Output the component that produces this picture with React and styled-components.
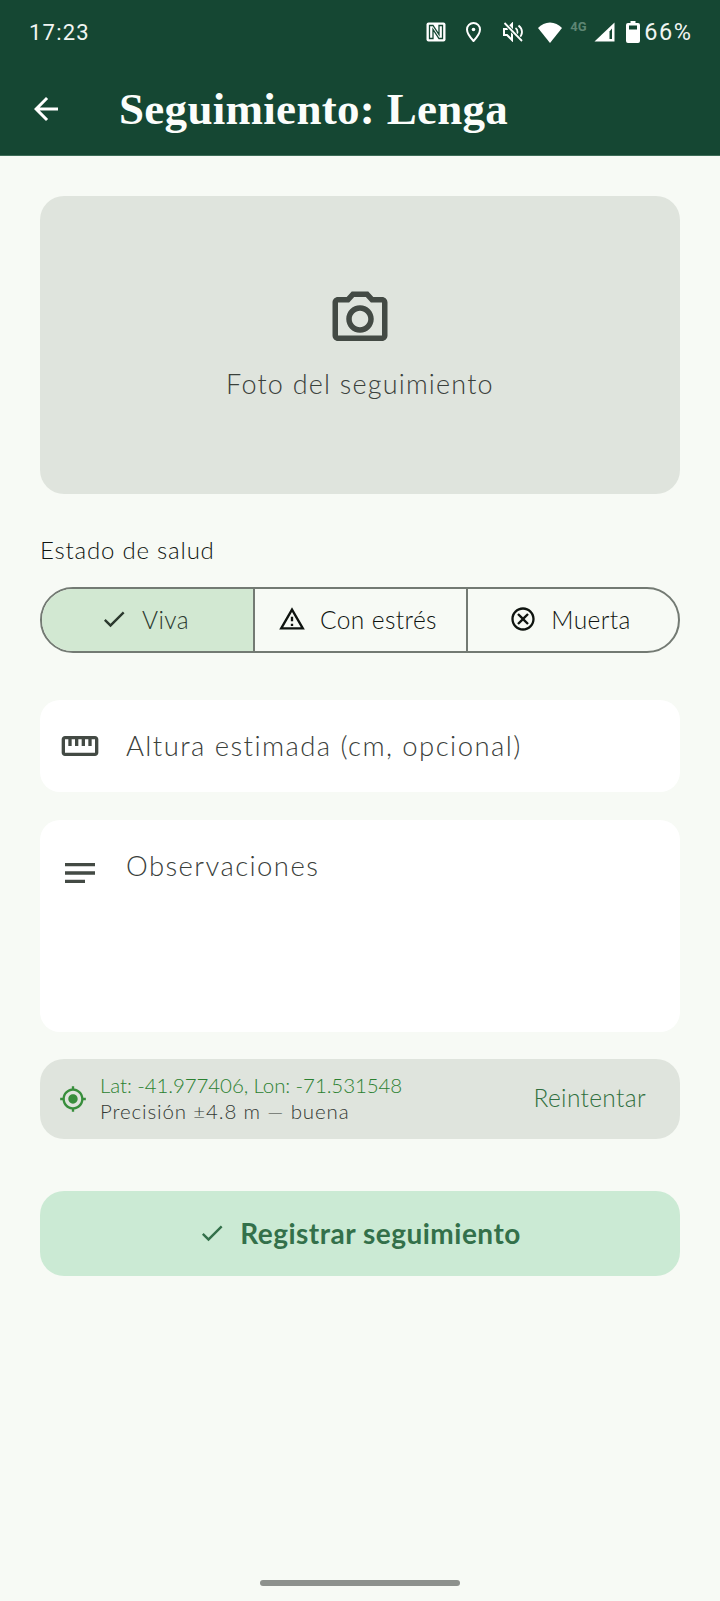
import React from 'react';
import styled, { createGlobalStyle } from 'styled-components';

const Global = createGlobalStyle`
  html, body { margin: 0; padding: 0; background: #f7faf5; }
  * { box-sizing: border-box; }
`;
const SANS = `Lato, "Open Sans", sans-serif`;

const Page = styled.div`
  width: 720px; height: 1601px; display: flex; flex-direction: column;
  background: #f7faf5; font-family: ${SANS};
`;
const Header = styled.header`
  height: 156px; flex: none; background: #154733; border-bottom: 1px solid #3d6d58;
  display: flex; flex-direction: column; color: #fff;
`;
const StatusBar = styled.div`
  height: 64px; display: flex; align-items: center; justify-content: space-between;
  padding: 0 29px 0 29px; font-family: Roboto, sans-serif; font-size: 22px; letter-spacing: 1.2px; color: #f1f5f2;
`;
const StatusIcons = styled.div`
  display: flex; align-items: center;
`;
const StatusGlyph = styled.svg`
  display: block; flex: none; margin-right: ${p => p.$mr || 0}px;
`;
const FourG = styled.span`
  font-size: 13px; font-weight: 700; letter-spacing: 0; color: #5e8674; margin: -11px 4px 0 0; width: 20px;
`;
const Percent = styled.span`
  font-size: 23.5px; letter-spacing: 1.5px; margin-right: -1.5px;
`;
const TopBar = styled.div`
  height: 87px; display: flex; align-items: center; padding: 2px 0 0 29px;
`;
const BackIcon = styled.svg`
  width: 36px; height: 36px; fill: #fff; margin-right: 55px; margin-left: -1px;
`;
const Title = styled.h1`
  margin: 0; font-family: "Liberation Serif", serif; font-weight: 700; font-size: 45px; letter-spacing: 0.3px; color: #fbfdfb;
`;
const Content = styled.main`
  flex: 1; padding: 40px 40px 0; display: flex; flex-direction: column;
`;
const PhotoCard = styled.div`
  height: 298px; border-radius: 24px; background: #dfe4dd; color: #3a403b;
  display: flex; flex-direction: column; align-items: center; padding-top: 90px;
`;
const PhotoIcon = styled.svg`
  width: 66px; height: 66px; fill: #434a44;
`;
const PhotoText = styled.div`
  font-size: 27px; font-weight: 300; margin-top: 15px; letter-spacing: 1.2px;
`;
const SectionLabel = styled.div`
  margin-top: 41px; font-size: 24px; font-weight: 300; line-height: 30px; color: #0f1410; letter-spacing: 0.8px;
`;
const Segments = styled.div`
  margin-top: 22px; height: 66px; display: grid; grid-template-columns: 211px 213px 1fr;
  border: 2px solid #737a73; border-radius: 33px; overflow: hidden;
`;
const Segment = styled.div`
  display: flex; align-items: center; justify-content: center; gap: 14px; padding: 0 6px 2px 0;
  background: ${p => (p.$active ? '#d2e8d2' : 'transparent')};
  color: ${p => (p.$active ? '#2c3a2f' : '#0f1410')};
  border-left: ${p => (p.$first ? 'none' : '2px solid #737a73')};
  font-size: 24.5px; font-weight: 300; letter-spacing: 0.4px;
`;
const SegIcon = styled.svg`
  width: 28px; height: 28px; fill: currentColor; flex: none;
`;
const Field = styled.div`
  margin-top: ${p => p.$mt}px; height: ${p => p.$h}px; background: #fff; border-radius: 20px;
  display: flex; align-items: ${p => (p.$top ? 'flex-start' : 'center')};
  padding: ${p => (p.$top ? '29px' : '0')} 0 0 20px; color: #434a44;
`;
const FieldIcon = styled.svg`
  width: 40px; height: 40px; fill: #434a44; flex: none; margin-right: 26px; margin-top: ${p => p.$mt || 0}px;
`;
const FieldText = styled.div`
  font-size: 27.5px; font-weight: 300; letter-spacing: 1.42px; line-height: 34px; color: #3a403b;
`;
const GpsCard = styled.div`
  margin-top: 27px; height: 80px; border-radius: 24px; background: #dfe4dd;
  display: flex; align-items: center; padding: 0 34px 0 19px;
`;
const GpsIcon = styled.svg`
  width: 28px; height: 28px; fill: #388e3c; flex: none; margin-right: 13px;
`;
const GpsText = styled.div`
  flex: 1; display: flex; flex-direction: column; gap: 1px; padding-bottom: 2px;
`;
const GpsCoords = styled.div`
  font-size: 20.5px; font-weight: 300; line-height: 25px; letter-spacing: -0.1px; color: #2b8131;
`;
const GpsAccuracy = styled.div`
  font-size: 20.5px; font-weight: 300; line-height: 25px; letter-spacing: 0.85px; color: #333934;
`;
const Retry = styled.div`
  font-size: 24.5px; font-weight: 300; letter-spacing: 0.35px; color: #317040; padding-bottom: 4px;
`;
const Submit = styled.div`
  margin-top: 52px; height: 85px; border-radius: 24px; background: #cbead4; color: #33704a;
  display: flex; align-items: center; justify-content: center; gap: 14px;
  font-size: 28px; font-weight: 700; letter-spacing: 0.5px; padding: 0 1px 1px 0;
`;
const SubmitIcon = styled.svg`
  width: 28px; height: 28px; fill: #33704a; flex: none;
`;
const HomeRow = styled.div`
  flex: none; height: 38px; display: flex; justify-content: center; padding-top: 17px;
`;
const HomeBar = styled.div`
  width: 200px; height: 6px; border-radius: 3px; background: #8d918d;
`;

const P = {
  check: 'M9 16.17L4.83 12l-1.42 1.41L9 19 21 7l-1.41-1.41z',
  warn: 'M12 5.99L19.53 19H4.47L12 5.99M12 2L1 21h22L12 2zm1 14h-2v2h2v-2zm0-6h-2v4h2v-4z',
  cancel: 'M12 2C6.47 2 2 6.47 2 12s4.47 10 10 10 10-4.47 10-10S17.53 2 12 2zm0 18c-4.41 0-8-3.59-8-8s3.59-8 8-8 8 3.59 8 8-3.59 8-8 8zm3.59-13L12 10.59 8.41 7 7 8.41 10.59 12 7 15.59 8.41 17 12 13.41 15.59 17 17 15.59 13.41 12 17 8.41z',
};

function StatusIconsRow() {
  return (
    <StatusIcons>
      <StatusGlyph $mr={20} width="20" height="20" viewBox="0 0 20 20">
        <rect x="0.5" y="0.5" width="19" height="19" rx="2" fill="#fff" />
        <path d="M3.5 3.5h3.500l6 9V3.500h3.500v13H13L7 7.500v9H3.500z" fill="none" stroke="#154733" strokeWidth="1.300" />
      </StatusGlyph>
      <StatusGlyph $mr={22} width="15" height="20" viewBox="0 0 15 20">
        <path d="M7.500 1C3.900 1 1 3.900 1 7.500 1 12 7.500 19 7.500 19S14 12 14 7.500C14 3.900 11.100 1 7.500 1z" fill="none" stroke="#fff" strokeWidth="2" />
        <circle cx="7.500" cy="7.500" r="1.800" fill="#fff" />
      </StatusGlyph>
      <StatusGlyph $mr={15} width="20" height="20" viewBox="0 0 20 20">
        <path d="M1 7v6h3l5 5V2L4 7z" fill="none" stroke="#fff" strokeWidth="2" />
        <path d="M12.500 6c1.500 1 2 2.500 2 4s-.5 3-2 4M15.500 3.500c2 1.600 3.500 3.800 3.500 6.500s-1.500 4.900-3.500 6.500" fill="none" stroke="#fff" strokeWidth="1.800" />
        <path d="M1.500 1l17.500 18" stroke="#154733" strokeWidth="3.600" />
        <path d="M1.500 1l17.500 18" stroke="#fff" strokeWidth="1.800" />
      </StatusGlyph>
      <StatusGlyph $mr={8} width="24" height="21" viewBox="0 0 24 21">
        <path d="M0 6C3.200 2.600 7.400 0.500 12 0.500S20.800 2.600 24 6L12 21z" fill="#fff" />
      </StatusGlyph>
      <FourG>4G</FourG>
      <StatusGlyph $mr={11} width="21" height="20" viewBox="0 0 21 20">
        <path d="M20.500 0.500v19H0.500z" fill="#fff" />
        <path d="M15.500 9.500V17h2.500V6.500z" fill="#154733" />
      </StatusGlyph>
      <StatusGlyph $mr={4} width="14" height="22" viewBox="0 0 14 22">
        <path d="M4.500 0h5v2H12a2 2 0 0 1 2 2v16a2 2 0 0 1-2 2H2a2 2 0 0 1-2-2V4a2 2 0 0 1 2-2h2.500z" fill="#fff" />
        <rect x="3" y="4.500" width="8" height="4" fill="#154733" />
      </StatusGlyph>
      <Percent>66%</Percent>
    </StatusIcons>
  );
}

export default function App() {
  return (
    <Page>
      <Global />
      <Header>
        <StatusBar>
          <span>17:23</span>
          <StatusIconsRow />
        </StatusBar>
        <TopBar>
          <BackIcon viewBox="0 0 24 24"><path d="M20 11H7.830l5.590-5.590L12 4l-8 8 8 8 1.410-1.410L7.830 13H20v-2z" /></BackIcon>
          <Title>Seguimiento: Lenga</Title>
        </TopBar>
      </Header>
      <Content>
        <PhotoCard>
          <PhotoIcon viewBox="0 0 24 24">
            <path d="M14.120 4l1.830 2H20v12H4V6h4.050l1.830-2h4.240M15 2H9L7.170 4H4c-1.100 0-2 .9-2 2v12c0 1.100.9 2 2 2h16c1.100 0 2-.9 2-2V6c0-1.100-.9-2-2-2h-3.170L15 2zm-3 7c1.650 0 3 1.350 3 3s-1.350 3-3 3-3-1.350-3-3 1.350-3 3-3m0-2c-2.760 0-5 2.240-5 5s2.240 5 5 5 5-2.240 5-5-2.240-5-5-5z" />
          </PhotoIcon>
          <PhotoText>Foto del seguimiento</PhotoText>
        </PhotoCard>
        <SectionLabel>Estado de salud</SectionLabel>
        <Segments>
          <Segment $active $first><SegIcon viewBox="0 0 24 24"><path d={P.check} /></SegIcon>Viva</Segment>
          <Segment><SegIcon viewBox="0 0 24 24"><path d={P.warn} /></SegIcon>Con estrés</Segment>
          <Segment><SegIcon viewBox="0 0 24 24"><path d={P.cancel} /></SegIcon>Muerta</Segment>
        </Segments>
        <Field $mt={47} $h={92}>
          <FieldIcon viewBox="0 0 24 24"><path d="M21 6H3c-1.100 0-2 .9-2 2v8c0 1.100.9 2 2 2h18c1.100 0 2-.9 2-2V8c0-1.100-.9-2-2-2zm0 10H3V8h2v4h2V8h2v4h2V8h2v4h2V8h2v4h2V8h2v8z" /></FieldIcon>
          <FieldText>Altura estimada (cm, opcional)</FieldText>
        </Field>
        <Field $mt={28} $h={212} $top>
          <FieldIcon $mt={4} viewBox="0 0 24 24"><path d="M3 6h18v2H3zM3 11h18v2H3zM3 16h12v2H3z" /></FieldIcon>
          <FieldText>Observaciones</FieldText>
        </Field>
        <GpsCard>
          <GpsIcon viewBox="0 0 24 24"><path d="M12 8c-2.210 0-4 1.790-4 4s1.790 4 4 4 4-1.790 4-4-1.790-4-4-4zm8.940 3c-.46-4.170-3.770-7.480-7.940-7.940V1h-2v2.060C6.830 3.520 3.520 6.830 3.060 11H1v2h2.060c.46 4.170 3.770 7.480 7.940 7.940V23h2v-2.060c4.170-.46 7.480-3.770 7.940-7.940H23v-2h-2.060zM12 19c-3.870 0-7-3.130-7-7s3.130-7 7-7 7 3.130 7 7-3.130 7-7 7z" /></GpsIcon>
          <GpsText>
            <GpsCoords>Lat: -41.977406, Lon: -71.531548</GpsCoords>
            <GpsAccuracy>Precisión ±4.8 m — buena</GpsAccuracy>
          </GpsText>
          <Retry>Reintentar</Retry>
        </GpsCard>
        <Submit>
          <SubmitIcon viewBox="0 0 24 24"><path d={P.check} /></SubmitIcon>
          Registrar seguimiento
        </Submit>
      </Content>
      <HomeRow><HomeBar /></HomeRow>
    </Page>
  );
}
